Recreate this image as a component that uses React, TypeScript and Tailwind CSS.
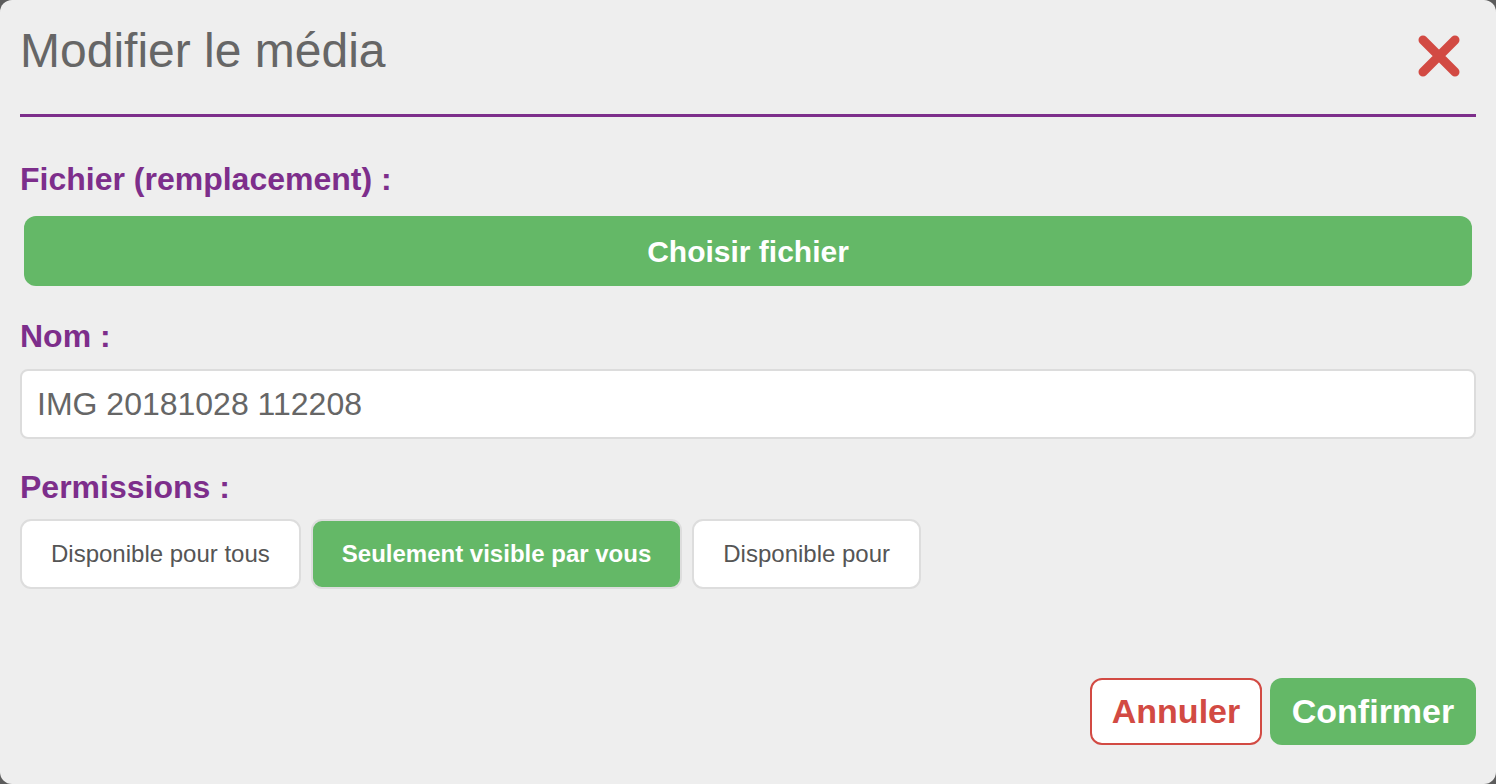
import { useState } from "react";

const permissions = ["Disponible pour tous", "Seulement visible par vous", "Disponible pour"];

// EditMediaModal
export default function App() {
  const [name, setName] = useState("IMG 20181028 112208");
  const [selected, setSelected] = useState(1);

  return (
    <main className="h-screen w-full bg-[#5c5c5c] font-['Liberation_Sans',Helvetica,Arial,sans-serif]">
      <div className="flex h-full flex-col rounded-[12px] bg-[#eeeeee] px-5">
        <header className="flex h-[117px] shrink-0 items-start justify-between border-b-[3px] border-[#7d2e8b] pt-[27px]">
          <h1 className="text-[48px] leading-[48px] text-[#666666]">Modifier le média</h1>
          <button className="mt-[7px] mr-[15px] block" aria-label="Fermer">
            <svg className="block" width="44" height="44" viewBox="0 0 44 44">
              <path
                d="M6 6 L38 38 M38 6 L6 38"
                stroke="#d24a43"
                strokeWidth="9"
                strokeLinecap="round"
                fill="none"
              />
            </svg>
          </button>
        </header>

        <p className="mt-[46px] text-[32px] leading-[32px] font-bold text-[#7d2e8b]">
          Fichier (remplacement) :
        </p>
        <button className="mx-1 mt-[21px] h-[70px] shrink-0 rounded-[12px] bg-[#64b867] text-[30px] font-bold text-white">
          Choisir fichier
        </button>

        <p className="mt-[34px] text-[32px] leading-[32px] font-bold text-[#7d2e8b]">Nom :</p>
        <input
          value={name}
          onChange={(e) => setName(e.target.value)}
          className="mt-[17px] h-[70px] shrink-0 rounded-[8px] border-2 border-[#dcdcdc] bg-white pl-[15px] text-[32px] text-[#666666] outline-none"
        />

        <p className="mt-[32px] text-[32px] leading-[32px] font-bold text-[#7d2e8b]">Permissions :</p>
        <div className="mt-[16px] flex gap-[10px]">
          {permissions.map((label, i) =>
            i === selected ? (
              <button
                key={label}
                onClick={() => setSelected(i)}
                className="h-[70px] rounded-[11px] border-2 border-[#dddddd] bg-[#64b867] px-[29px] text-[24px] font-bold text-white"
              >
                {label}
              </button>
            ) : (
              <button
                key={label}
                onClick={() => setSelected(i)}
                className="h-[70px] rounded-[11px] border-2 border-[#dddddd] bg-white px-[29px] text-[24px] text-[#555555]"
              >
                {label}
              </button>
            )
          )}
        </div>

        <div className="mt-[89px] flex justify-end gap-2">
          <button className="h-[67px] w-[172px] rounded-[12px] border-2 border-[#d24a43] bg-white text-[34px] font-bold text-[#d24a43]">
            Annuler
          </button>
          <button className="h-[67px] w-[206px] rounded-[12px] bg-[#64b867] text-[34px] font-bold text-white">
            Confirmer
          </button>
        </div>
      </div>
    </main>
  );
}
